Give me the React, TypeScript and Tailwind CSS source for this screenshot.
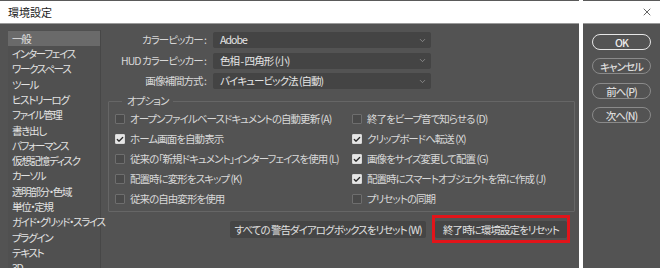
import { ChevronDown, X, Check } from 'lucide-react';

const FONT = "font-['Noto_Sans_CJK_JP',sans-serif] [font-feature-settings:'palt']";

const SIDEBAR = [
  '一般',
  'インターフェイス',
  'ワークスペース',
  'ツール',
  'ヒストリーログ',
  'ファイル管理',
  '書き出し',
  'パフォーマンス',
  '仮想記憶ディスク',
  'カーソル',
  '透明部分・色域',
  '単位・定規',
  'ガイド・グリッド・スライス',
  'プラグイン',
  'テキスト',
  '3D',
];

const DROPDOWNS = [
  { label: 'カラーピッカー :', value: 'Adobe' },
  { label: 'HUD カラーピッカー :', value: '色相 - 四角形 (小)' },
  { label: '画像補間方式 :', value: 'バイキュービック法 (自動)' },
];

const LEFT_OPTS = [
  { label: 'オープンファイルベースドキュメントの自動更新 (A)', on: false },
  { label: 'ホーム画面を自動表示', on: true },
  { label: '従来の「新規ドキュメント」インターフェイスを使用 (L)', on: false },
  { label: '配置時に変形をスキップ (K)', on: false },
  { label: '従来の自由変形を使用', on: false },
];

const RIGHT_OPTS = [
  { label: '終了をビープ音で知らせる (D)', on: false },
  { label: 'クリップボードへ転送 (X)', on: true },
  { label: '画像をサイズ変更して配置 (G)', on: true },
  { label: '配置時にスマートオブジェクトを常に作成 (J)', on: true },
  { label: 'プリセットの同期', on: false },
];

function Box({ on }: { on: boolean }) {
  return (
    <span
      className={`flex h-[10px] w-[10px] shrink-0 items-center justify-center rounded-[1px] border ${
        on ? 'border-[#d8d8d8] bg-[#e6e6e6]' : 'border-[#6e6e6e] bg-[#4a4a4a]'
      }`}
    >
      {on && <Check className="h-[9px] w-[9px] text-[#2c2c2c]" strokeWidth={4} />}
    </span>
  );
}

function Option({ label, on }: { label: string; on: boolean }) {
  return (
    <div className="flex h-[20px] items-center gap-[5px]">
      <Box on={on} />
      <span className="whitespace-nowrap">{label}</span>
    </div>
  );
}

export default function App() {
  return (
    <div className={`flex h-[268px] w-[660px] overflow-hidden bg-white text-[10.5px] tracking-[-0.95px] text-[#d8d8d8] ${FONT}`}>
      {/* main dialog */}
      <div className="flex w-[579px] flex-col border-t border-[#5a5a5a]">
        <div className="flex h-[23px] shrink-0 items-center border-b border-[#9a9a9a] bg-white px-[8px] text-[11px] tracking-normal text-[#1a1a1a]">
          環境設定
        </div>
        <div className="flex flex-1 gap-[7px] bg-[#535353] pl-[8px] pt-[6px]">
          <div className="w-[93px] shrink-0 border-r border-[#474747] bg-[#505050]">
            <ul className="flex flex-col pt-[1px] tracking-[-1.3px]">
              {SIDEBAR.map((s, i) => (
                <li
                  key={s}
                  className={`flex h-[15.3px] shrink-0 items-center whitespace-nowrap pl-[4px] text-[#e2e2e2] ${
                    i === 0 ? 'bg-[#6a6a6a]' : ''
                  }`}
                >
                  {s}
                </li>
              ))}
            </ul>
          </div>

          <div className="flex w-[467px] flex-col">
            <div className="flex flex-col gap-[4.5px] pt-[2px]">
              {DROPDOWNS.map((d) => (
                <div key={d.label} className="flex h-[16px] items-center">
                  <span className="w-[105px] whitespace-nowrap pr-[7px] text-right">{d.label}</span>
                  <div className="flex h-full w-[218px] items-center justify-between rounded-[2px] bg-[#444444] pl-[7px] pr-[4px] text-[#e4e4e4]">
                    <span>{d.value}</span>
                    <ChevronDown className="h-[9px] w-[9px] text-[#9a9a9a]" strokeWidth={2} />
                  </div>
                </div>
              ))}
            </div>

            <fieldset className="mt-[6px] h-[117px] w-[467px] rounded-[1px] border border-[#666666] px-[6px]">
              <legend className="ml-[7px] px-[5px] leading-[12px]">オプション</legend>
              <div className="mt-[2px] flex">
                <div className="flex w-[237px] flex-col">
                  {LEFT_OPTS.map((o) => (
                    <Option key={o.label} {...o} />
                  ))}
                </div>
                <div className="flex flex-col">
                  {RIGHT_OPTS.map((o) => (
                    <Option key={o.label} {...o} />
                  ))}
                </div>
              </div>
            </fieldset>

            <div className="mt-[3px] flex items-start gap-[6px] pl-[122px]">
              <button className="mt-[6px] h-[17px] w-[196px] whitespace-nowrap rounded-[2px] bg-[#454545] text-[#e0e0e0]">
                すべての 警告ダイアログボックスをリセット (W)
              </button>
              <div className="border-[3px] border-[#e2141a] pt-[3px] pb-[2px]">
                <button className="block h-[17px] w-[132px] whitespace-nowrap rounded-[2px] bg-[#454545] text-[#e0e0e0]">
                  終了時に環境設定をリセット
                </button>
              </div>
            </div>
          </div>
        </div>
      </div>

      {/* right panel */}
      <div className="ml-[4px] flex flex-1 flex-col border-t border-[#5a5a5a]">
        <div className="flex h-[23px] shrink-0 items-center justify-end border-b border-[#9a9a9a] bg-white pr-[7px]">
          <X className="h-[12px] w-[12px] text-[#222]" strokeWidth={1.4} />
        </div>
        <div className="flex flex-1 flex-col gap-[8.3px] bg-[#535353] pl-[9px] pt-[10px] font-medium">
          <button className="h-[16px] w-[59px] rounded-full border-[1.5px] border-[#e6e6e6] text-[#ededed]">OK</button>
          <button className="h-[16px] w-[59px] rounded-full border border-[#8a8a8a] text-[#dcdcdc]">キャンセル</button>
          <button className="h-[16px] w-[59px] rounded-full border border-[#8a8a8a] text-[#dcdcdc]">前へ(P)</button>
          <button className="h-[16px] w-[59px] rounded-full border border-[#8a8a8a] text-[#dcdcdc]">次へ(N)</button>
        </div>
      </div>
    </div>
  );
}
